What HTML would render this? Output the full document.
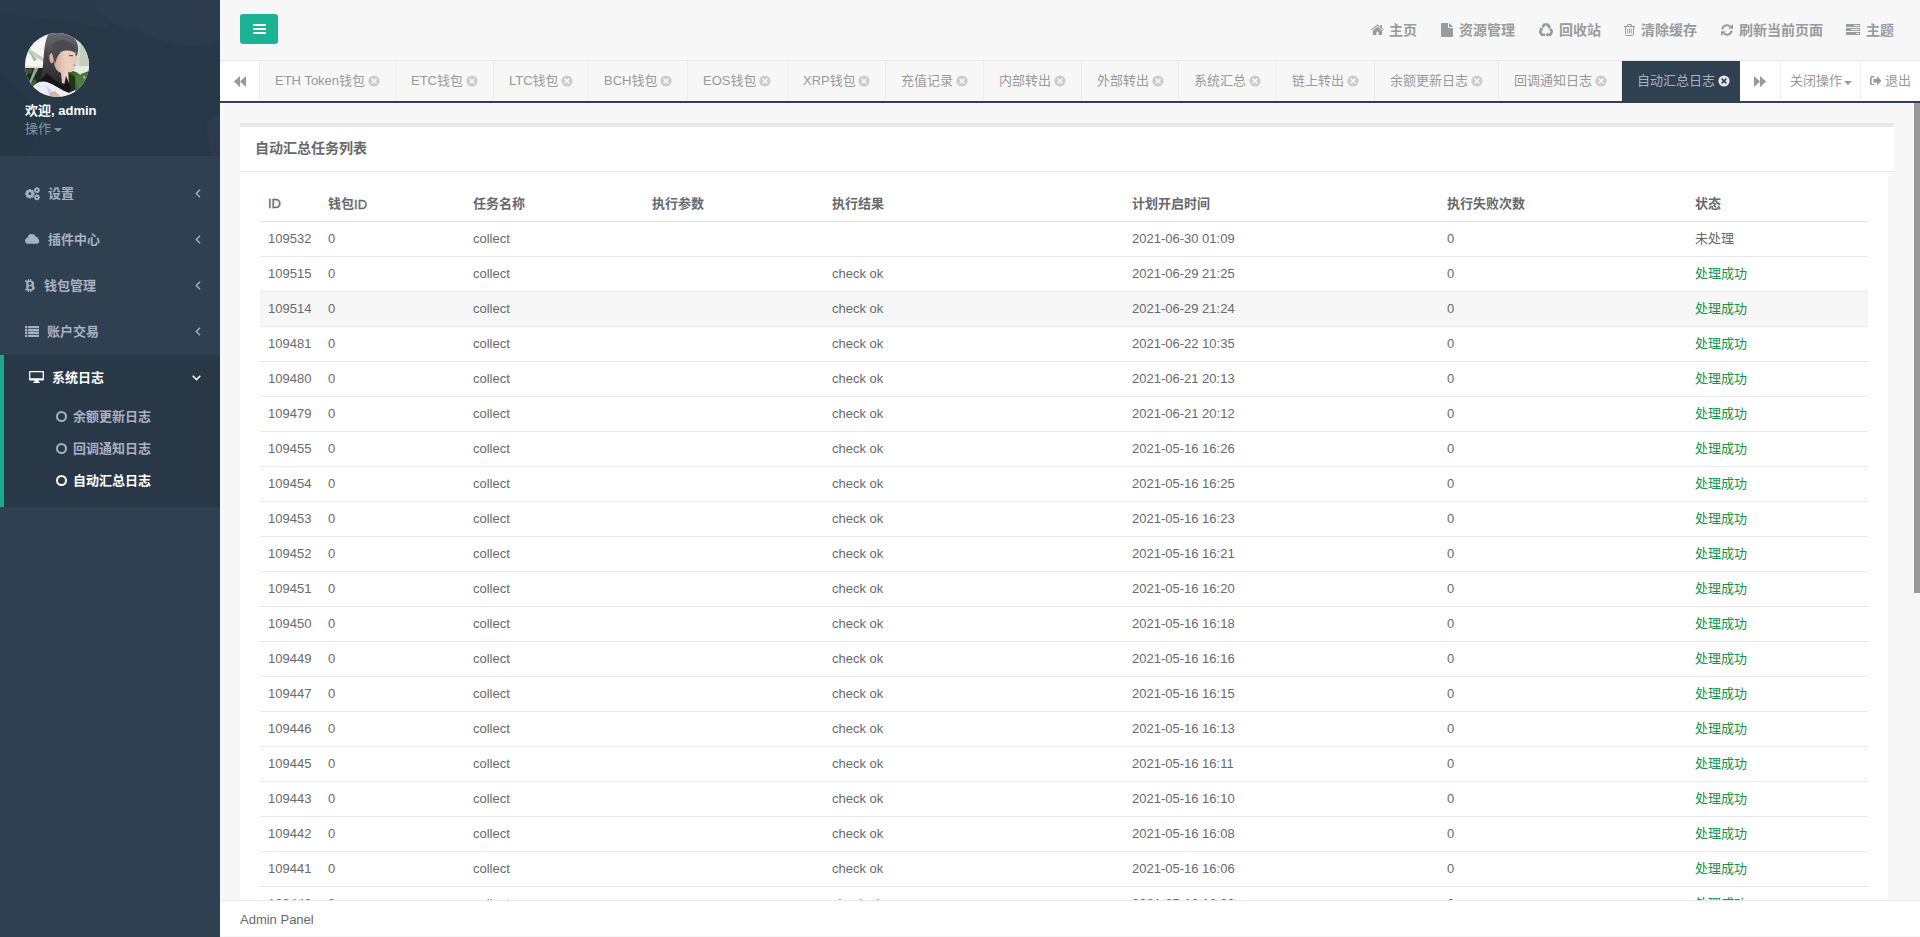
<!DOCTYPE html>
<html lang="zh-CN">
<head>
<meta charset="utf-8">
<title>Admin Panel</title>
<style>
*{box-sizing:border-box;margin:0;padding:0}
html,body{width:1920px;height:937px;overflow:hidden}
body{font-family:"Liberation Sans","Noto Sans CJK SC",sans-serif;font-size:13px;color:#676a6c;background:#f7f7f7;position:relative}
a{text-decoration:none;color:inherit}
svg{display:block}
/* ---------- sidebar ---------- */
#side{position:absolute;left:0;top:0;width:220px;height:937px;background:#2f4050}
#prof{position:absolute;left:0;top:0;width:220px;height:156px;background:#273848;overflow:hidden}
#avatar{position:absolute;left:25px;top:33px;width:64px;height:64px;border-radius:50%;overflow:hidden}
#hello{position:absolute;left:25px;top:101.500px;font-size:13px;font-weight:700;color:#fff;line-height:18px;white-space:nowrap}
#oper{position:absolute;left:25px;top:120px;font-size:13px;color:#8095a8;line-height:18px;white-space:nowrap}
.mi{position:absolute;left:0;width:220px;height:46px;color:#a7b1c2;font-weight:700;font-size:13px;line-height:46px;white-space:nowrap}
.mi .ic{position:absolute;left:0;top:0}
.mi .tx{position:absolute;top:.5px}
.mi .ar{position:absolute;top:0}
#act{position:absolute;left:0;top:355px;width:220px;height:152px;background:#293846;border-left:4px solid #19aa8d}
.si{position:absolute;left:0;width:220px;height:32px;line-height:32px;color:#a7b1c2;font-weight:700;font-size:13px;white-space:nowrap}
.si .c{position:absolute;left:56px;top:11px;width:11px;height:11px;border:2px solid currentColor;border-radius:50%}
.si .t{position:absolute;left:73px;top:.5px}
/* ---------- top ---------- */
#top{position:absolute;left:220px;top:0;width:1700px;height:60px;background:#f7f7f7}
#burger{position:absolute;left:20px;top:14px;width:38px;height:30px;background:#1ab394;border-radius:3px}
#burger i{position:absolute;left:13px;width:13px;height:2px;background:#fff;border-radius:.5px}
.tl{position:absolute;top:0;height:60px;line-height:60px;font-size:14px;font-weight:700;color:#999c9e;white-space:nowrap}
.tl svg{position:absolute;left:0}
/* ---------- tabs ---------- */
#tabs{position:absolute;left:220px;top:60px;width:1700px;height:43px;background:#f7f7f7;border-top:1px solid #e7eaec;border-bottom:2px solid #2f4050;overflow:hidden}
#tabs .btnl{position:absolute;left:0;top:0;width:40px;height:40px;background:#fff;border-right:1px solid #eee}
#tablist{position:absolute;left:40px;top:0;height:40px;white-space:nowrap;font-size:0}
.tab{display:inline-block;height:40px;line-height:40px;font-size:13px;color:#999;border-right:1px solid #eee;text-align:left;padding-left:15px;white-space:nowrap;vertical-align:top;overflow:hidden}
.tab .cx{display:inline-block;vertical-align:-1.500px;color:#ccc;margin-left:-1px}
.tab.active{background:#2f4050;color:#a7b1c2;border-right:none}
.tab.active .cx{color:#e8e8e8}
#tabs .btnr{position:absolute;left:1520px;top:0;width:41px;height:40px;background:#fff;border-right:1px solid #eee}
#tabs .closeop{position:absolute;left:1561px;top:0;width:80px;height:40px;background:#fff;border-right:1px solid #eee;color:#999;line-height:40px;padding-left:9px;font-size:13px}
#tabs .exit{position:absolute;left:1641px;top:0;width:59px;height:40px;background:#fff;color:#999;line-height:40px;font-size:13px}
/* ---------- content ---------- */
#ibt{position:absolute;left:240px;top:123px;width:1654px;height:49px;background:#fff;border-top:4px solid #e7eaec;border-bottom:1px solid #e7eaec}
#ibt h5{position:absolute;left:15px;top:12px;font-size:14px;font-weight:700;color:#676a6c;line-height:18px}
#ibc{position:absolute;left:240px;top:172px;width:1648px;height:728px;background:#fff;overflow:hidden}
table{position:absolute;left:20px;top:13px;width:1608px;border-collapse:collapse;table-layout:fixed}
th{height:36px;text-align:left;padding:2px 8px 0;font-weight:700;font-size:13px;border-bottom:1px solid #e0e3e5;color:#676a6c;vertical-align:middle}
td{height:35px;padding:0 8px;border-bottom:1px solid #e7eaec;font-size:13px;color:#676a6c;vertical-align:middle;white-space:nowrap}
tr.hov td{background:#f6f6f6}
td.ok{color:#12924a}
td.cj{padding-bottom:3px}
.sb6{font-weight:400;-webkit-text-stroke:.35px currentColor}
th.cj{padding:0 8px 1px}
th.cj1{padding:1px 8px 0}
#sb{position:absolute;left:1913px;top:103px;width:7px;height:491px;background:#999;border-left:1px solid #fff;border-bottom:1px solid #fff}
#foot{position:absolute;left:220px;top:900px;width:1700px;height:36px;background:#fff;border-top:1px solid #e7eaec;padding-left:20px;line-height:37px;font-size:13px;color:#676a6c}
</style>
</head>
<body>
<div id="side">
  <div id="prof">
    <svg width="220" height="156" viewBox="0 0 220 156" style="position:absolute;left:0;top:0"><path d="M95 0H220V40C190 52 160 40 135 30C118 24 104 26 95 0Z" fill="#fff" fill-opacity=".025"/><path d="M0 14C40 18 80 22 110 30L95 0H0Z" fill="#fff" fill-opacity=".012"/><path d="M205 122L220 112V156H212Z" fill="#fff" fill-opacity=".02"/><path d="M0 70L40 110L30 156H0Z" fill="#000" fill-opacity=".03"/></svg>
    <div id="avatar">
      <svg viewBox="0 0 64 64" width="64" height="64">
        <defs><filter id="bl" x="-10%" y="-10%" width="120%" height="120%"><feGaussianBlur stdDeviation="0.7"/></filter>
        <linearGradient id="hg" x1="0" y1="0" x2="0" y2="1"><stop offset="0" stop-color="#6b6b73"/><stop offset=".45" stop-color="#424147"/><stop offset="1" stop-color="#222126"/></linearGradient>
        <linearGradient id="sg" x1="0" y1="0" x2="1" y2="0"><stop offset="0" stop-color="#d3ab97"/><stop offset=".5" stop-color="#ecd0bf"/><stop offset="1" stop-color="#e8c7b4"/></linearGradient></defs>
        <rect width="64" height="64" fill="#f6f7f5"/>
        <g filter="url(#bl)">
        <path d="M50 4 L64 10 V34 H50Z" fill="#d3dccf"/>
        <path d="M56 8 L64 20 V34 H54Z" fill="#c3cfbf"/>
        <path d="M2 14 L20 26 L19 29 L1 19Z" fill="#c4d0bc"/>
        <path d="M4 18 L12 27 L9 28Z" fill="#9fb591"/>
        <rect x="0" y="34" width="24" height="30" fill="#1f2a1b"/>
        <path d="M0 36 L8 35 L6 40 L0 42Z" fill="#3a5230"/>
        <path d="M4 50 L10 46 L12 50 L8 55Z" fill="#3f5f31"/>
        <path d="M10 34 L14 34 L5 52 L3 52Z" fill="#9aa79a"/>
        <rect x="40" y="33" width="24" height="31" fill="#3a632d"/>
        <path d="M48 33 H64 V38 L56 41 L48 38Z" fill="#e6ece3"/>
        <path d="M50 42 L62 40 L60 52 L52 56Z" fill="#4a7d38"/><path d="M52 40 L55 39 L56 42Z M58 44 L60 43 L60 46Z" fill="#dfe8da"/>
        <path d="M44 40 L50 44 L50 60 L44 60Z" fill="#24331e"/>
        <path d="M0 33 H22 V35 H0Z" fill="#dfe3dd"/>
        <path d="M24 0 C19 8 19 22 18 32 C17 42 15 50 13 56 L30 60 L44 50 L40 38 L52 22 C55 14 52 5 44 1 C38 -2 30 -2 24 0Z" fill="url(#hg)"/>
        <path d="M33 19 C36 15 44 14 50 17 C51 20 50 22 51 24 L53 27 L51 29 L51 31 L50 32 L50 35 C49 38 46 40 43 39 L44 52 L37 50 L36 40 C31 38 29 33 29 28 C29 24 31 21 33 19Z" fill="url(#sg)"/>
        <path d="M25 21 C27 19 29 21 29 24 C29 28 28 31 26 30 C24 28 24 23 25 21Z" fill="#d9b5a1"/>
        <path d="M31 8 C38 6 47 8 51 16 L50 20 C46 17 40 17 36 19 C33 22 31 26 30 31 L27 20 C27 14 28 10 31 8Z" fill="#4b4a51"/>
        <path d="M48.500 31.500 L50.500 32 L49.500 33.300Z" fill="#a8505a"/>
        <path d="M44 22 H48 V23.200 H44Z" fill="#6b5a58"/>
        <path d="M22 40 C27 45 33 50 39 53 L41 43 L46 55 L43 60 C34 58 24 52 15 48Z" fill="#131317"/>
        <path d="M5 58 C9 50 16 47 22 49 C30 52 36 57 44 60 L50 57 L52 64 H8Z" fill="#eceff9"/>
        <path d="M20 52 C24 54 28 58 30 64 H24 C24 60 22 56 20 52Z" fill="#cfd6ec"/>
        <path d="M24 60 L30 58 L36 64 H26Z" fill="#d9b5a1"/>
        </g>
      </svg>
    </div>
    <div id="hello">欢迎, admin</div>
    <div id="oper">操作<span style="display:inline-block;width:0;height:0;border-left:4px solid transparent;border-right:4px solid transparent;border-top:4px solid #8095a8;margin-left:3px;vertical-align:1px"></span></div>
  </div>

  <div class="mi" style="top:170px"><span class="ic"><svg viewBox="0 0 16 14" width="16" height="14" style="position:absolute;left:24.500px;top:16.500px" fill="currentColor"><path fill-rule="evenodd" d="M8.61 5.61L9.69 5.75L9.69 7.85L8.61 7.99L8.37 8.58L9.03 9.44L7.54 10.93L6.68 10.27L6.09 10.51L5.95 11.59L3.85 11.59L3.71 10.51L3.12 10.27L2.26 10.93L0.77 9.44L1.43 8.58L1.19 7.99L0.11 7.85L0.11 5.75L1.19 5.61L1.43 5.02L0.77 4.16L2.26 2.67L3.12 3.33L3.71 3.09L3.85 2.01L5.95 2.01L6.09 3.09L6.68 3.33L7.54 2.67L9.03 4.16L8.37 5.02ZM3.45 6.80a1.45 1.45 0 1 0 2.9 0a1.45 1.45 0 1 0 -2.9 0Z"/><path fill-rule="evenodd" d="M14.23 2.45L14.93 2.54L14.93 3.86L14.23 3.95L14.08 4.32L14.51 4.87L13.57 5.81L13.02 5.38L12.65 5.53L12.56 6.23L11.24 6.23L11.15 5.53L10.78 5.38L10.23 5.81L9.29 4.87L9.72 4.32L9.57 3.95L8.87 3.86L8.87 2.54L9.57 2.45L9.72 2.08L9.29 1.53L10.23 0.59L10.78 1.02L11.15 0.87L11.24 0.17L12.56 0.17L12.65 0.87L13.02 1.02L13.57 0.59L14.51 1.53L14.08 2.08ZM11.05 3.20a0.85 0.85 0 1 0 1.7 0a0.85 0.85 0 1 0 -1.7 0Z"/><path fill-rule="evenodd" d="M14.23 9.55L14.93 9.64L14.93 10.96L14.23 11.05L14.08 11.42L14.51 11.97L13.57 12.91L13.02 12.48L12.65 12.63L12.56 13.33L11.24 13.33L11.15 12.63L10.78 12.48L10.23 12.91L9.29 11.97L9.72 11.42L9.57 11.05L8.87 10.96L8.87 9.64L9.57 9.55L9.72 9.18L9.29 8.63L10.23 7.69L10.78 8.12L11.15 7.97L11.24 7.27L12.56 7.27L12.65 7.97L13.02 8.12L13.57 7.69L14.51 8.63L14.08 9.18ZM11.05 10.30a0.85 0.85 0 1 0 1.7 0a0.85 0.85 0 1 0 -1.7 0Z"/></svg></span><span class="tx" style="left:48px">设置</span><span class="ar" style="left:195px"><svg viewBox="0 0 6 9" width="6" height="9" style="position:absolute;left:0;top:19px" fill="none" stroke="currentColor" stroke-width="1.4"><path d="M5 0.700L1.300 4.500 5 8.300"/></svg></span></div>
  <div class="mi" style="top:216px"><span class="ic"><svg viewBox="0 0 15 11" width="15" height="11" style="position:absolute;left:24.500px;top:16.500px" fill="currentColor"><path d="M3.200 10.700a3.100 3.100 0 0 1-.6-6.150A4.300 4.300 0 0 1 10.700 3.500a2.600 2.600 0 0 1 2.300 2.300A2.700 2.700 0 0 1 12.300 10.700z"/></svg></span><span class="tx" style="left:48px">插件中心</span><span class="ar" style="left:195px"><svg viewBox="0 0 6 9" width="6" height="9" style="position:absolute;left:0;top:19px" fill="none" stroke="currentColor" stroke-width="1.4"><path d="M5 0.700L1.300 4.500 5 8.300"/></svg></span></div>
  <div class="mi" style="top:262px"><span class="ic"><svg viewBox="0 0 10 13" width="10" height="13" style="position:absolute;left:25px;top:17px" fill="currentColor"><path fill-rule="evenodd" d="M0 1.600H2.900V0H4.100V1.600H5.100V0H6.300V1.650C8.200 1.900 9.200 2.950 9.200 4.400C9.200 5.500 8.600 6.300 7.700 6.600C9 6.900 9.800 7.900 9.800 9.100C9.800 10.600 8.500 11.400 6.300 11.580V13H5.100V11.600H4.100V13H2.900V11.600H0V10.200H1.300V3H0ZM3.600 3.100V5.900H5C6.100 5.900 6.600 5.300 6.600 4.500C6.600 3.600 6.100 3.100 5 3.100ZM3.600 7.300V10.100H5.300C6.500 10.100 7.100 9.600 7.100 8.700C7.100 7.800 6.500 7.300 5.300 7.300Z"/></svg></span><span class="tx" style="left:44px">钱包管理</span><span class="ar" style="left:195px"><svg viewBox="0 0 6 9" width="6" height="9" style="position:absolute;left:0;top:19px" fill="none" stroke="currentColor" stroke-width="1.4"><path d="M5 0.700L1.300 4.500 5 8.300"/></svg></span></div>
  <div class="mi" style="top:308px"><span class="ic"><svg viewBox="0 0 14 11" width="14" height="11" style="position:absolute;left:24.700px;top:17.600px" fill="currentColor"><path d="M0 0h2.300v2.200H0zM3.100 0H14v2.200H3.100zM0 2.930h2.300v2.200H0zM3.100 2.930H14v2.200H3.100zM0 5.860h2.300v2.200H0zM3.100 5.860H14v2.200H3.100zM0 8.800h2.300V11H0zM3.100 8.800H14V11H3.100z"/></svg></span><span class="tx" style="left:47px">账户交易</span><span class="ar" style="left:195px"><svg viewBox="0 0 6 9" width="6" height="9" style="position:absolute;left:0;top:19px" fill="none" stroke="currentColor" stroke-width="1.4"><path d="M5 0.700L1.300 4.500 5 8.300"/></svg></span></div>
  <div id="act"></div>
  <div class="mi" style="top:354px;color:#fff"><span class="ic"><svg viewBox="0 0 15 12" width="15" height="12" style="position:absolute;left:29px;top:17px" fill="currentColor"><path fill-rule="evenodd" d="M1 0h13a1 1 0 0 1 1 1v7.500a1 1 0 0 1-1 1H9.300l.5 1.500h.9v1H4.300v-1h.9l.5-1.500H1a1 1 0 0 1-1-1V1a1 1 0 0 1 1-1zM1.300 1.300v6h12.400v-6z"/></svg></span><span class="tx" style="left:52px">系统日志</span><span class="ar" style="left:192px"><svg viewBox="0 0 9 6" width="9" height="6" style="position:absolute;left:0;top:21px" fill="none" stroke="currentColor" stroke-width="1.500"><path d="M0.700 0.800L4.500 4.600 8.300 0.800"/></svg></span></div>
  <div class="si" style="top:400px"><span class="c"></span><span class="t">余额更新日志</span></div>
  <div class="si" style="top:432px"><span class="c"></span><span class="t">回调通知日志</span></div>
  <div class="si" style="top:464px;color:#fff"><span class="c"></span><span class="t">自动汇总日志</span></div>
</div>

<div id="top">
  <div id="burger"><i style="top:10px"></i><i style="top:14px"></i><i style="top:18px"></i></div>
  <a class="tl" style="left:1151px;padding-left:18px"><svg viewBox="0 0 13 11" width="13" height="11" style="top:24px" fill="currentColor"><path d="M6.500 0.200L0.100 5.500l.7.850L6.500 1.700l5.700 4.650.7-.850-1.900-1.550V1h-1.600v1.650z"/><path d="M6.500 2.800L1.900 6.550V10.500a.4.4 0 0 0 .4.400H5.400V7.700h2.200v3.200h3.100a.4.4 0 0 0 .4-.4V6.550z"/></svg>主页</a>
  <a class="tl" style="left:1221px;padding-left:18px"><svg viewBox="0 0 12 14" width="12" height="14" style="top:23px" fill="currentColor"><path d="M.8 0H7v4.300a.7.700 0 0 0 .7.700H12v8.200a.8.800 0 0 1-.8.800H.8a.8.800 0 0 1-.8-.8V.8A.8.800 0 0 1 .8 0z"/><path d="M8 .1c.3.100.500.300.700.500l2.700 2.700c.2.200.4.400.5.700H8z"/></svg>资源管理</a>
  <a class="tl" style="left:1319px;padding-left:20px"><svg viewBox="0 0 14 13" width="14" height="13" style="top:23px" fill="none" stroke="currentColor"><path d="M5.2 1.5L8.8 1.5L13 8.7L11.2 11.8L2.8 11.8L1 8.7Z" stroke-width="2.600" stroke-linejoin="round" stroke-dasharray="9.95 2.00" stroke-dashoffset="3.18"/><path d="M12.08 2.56L8.11 4.88L11.25 5.71ZM8.60 14.10L8.60 9.50L6.30 11.80ZM0.30 5.33L4.28 7.65L3.45 4.50Z" fill="currentColor" stroke="none"/></svg>回收站</a>
  <a class="tl" style="left:1404px;padding-left:17px"><svg viewBox="0 0 11 12" width="11" height="12" style="top:24px" fill="none" stroke="currentColor"><path d="M0 2.500h11M3.500 2.300V.900a.4.400 0 0 1 .4-.4h3.200a.4.400 0 0 1 .4.400v1.400M1.500 2.700v7.800a1 1 0 0 0 1 1h6a1 1 0 0 0 1-1V2.700" stroke-width="1"/><path d="M3.700 4.500v5M5.500 4.500v5M7.300 4.500v5" stroke-width=".9"/></svg>清除缓存</a>
  <a class="tl" style="left:1501px;padding-left:18px"><svg viewBox="0 0 12 12" width="12" height="12" style="top:24px" fill="none" stroke="currentColor" stroke-width="2.100"><path d="M1.300 5.300A4.700 4.700 0 0 1 9.300 2.700"/><path d="M10.700 6.700A4.700 4.700 0 0 1 2.700 9.300"/><path d="M12 0V4.800H7.200zM0 12V7.200H4.800z" fill="currentColor" stroke="none"/></svg>刷新当前页面</a>
  <a class="tl" style="left:1626px;padding-left:20px"><svg viewBox="0 0 14 11" width="14" height="11" style="top:24px" fill="currentColor"><path fill-rule="evenodd" d="M0 0h14v3H0zM8 1v1h5V1zM0 4h14v3H0zM5 5v1h8V5zM0 8h14v3H0zM10 9v1h3V9z"/></svg>主题</a>
</div>

<div id="tabs">
  <div class="btnl"><svg viewBox="0 0 12 11" width="12" height="11" style="position:absolute;left:14px;top:15px" fill="#999"><path d="M6 0v11L0 5.500zM12 0v11L6 5.500z"/></svg></div>
  <div id="tablist"><a class="tab" style="width:136px">ETH Token钱包 <svg class="cx" viewBox="0 0 12 12" width="12" height="12"><circle cx="6" cy="6" r="5.6" fill="currentColor"/><path d="M4.1 4.1l3.800 3.800M7.900 4.100l-3.800 3.800" stroke="#f7f7f7" stroke-width="1.500" stroke-linecap="round"/></svg></a><a class="tab" style="width:98px">ETC钱包 <svg class="cx" viewBox="0 0 12 12" width="12" height="12"><circle cx="6" cy="6" r="5.6" fill="currentColor"/><path d="M4.1 4.1l3.800 3.800M7.900 4.100l-3.800 3.800" stroke="#f7f7f7" stroke-width="1.500" stroke-linecap="round"/></svg></a><a class="tab" style="width:95px">LTC钱包 <svg class="cx" viewBox="0 0 12 12" width="12" height="12"><circle cx="6" cy="6" r="5.6" fill="currentColor"/><path d="M4.1 4.1l3.800 3.800M7.900 4.100l-3.800 3.800" stroke="#f7f7f7" stroke-width="1.500" stroke-linecap="round"/></svg></a><a class="tab" style="width:99px">BCH钱包 <svg class="cx" viewBox="0 0 12 12" width="12" height="12"><circle cx="6" cy="6" r="5.6" fill="currentColor"/><path d="M4.1 4.1l3.800 3.800M7.900 4.100l-3.800 3.800" stroke="#f7f7f7" stroke-width="1.500" stroke-linecap="round"/></svg></a><a class="tab" style="width:100px">EOS钱包 <svg class="cx" viewBox="0 0 12 12" width="12" height="12"><circle cx="6" cy="6" r="5.6" fill="currentColor"/><path d="M4.1 4.1l3.800 3.800M7.900 4.100l-3.800 3.800" stroke="#f7f7f7" stroke-width="1.500" stroke-linecap="round"/></svg></a><a class="tab" style="width:98px">XRP钱包 <svg class="cx" viewBox="0 0 12 12" width="12" height="12"><circle cx="6" cy="6" r="5.6" fill="currentColor"/><path d="M4.1 4.1l3.800 3.800M7.900 4.100l-3.800 3.800" stroke="#f7f7f7" stroke-width="1.500" stroke-linecap="round"/></svg></a><a class="tab" style="width:98px">充值记录 <svg class="cx" viewBox="0 0 12 12" width="12" height="12"><circle cx="6" cy="6" r="5.6" fill="currentColor"/><path d="M4.1 4.1l3.800 3.800M7.900 4.100l-3.800 3.800" stroke="#f7f7f7" stroke-width="1.500" stroke-linecap="round"/></svg></a><a class="tab" style="width:98px">内部转出 <svg class="cx" viewBox="0 0 12 12" width="12" height="12"><circle cx="6" cy="6" r="5.6" fill="currentColor"/><path d="M4.1 4.1l3.800 3.800M7.900 4.100l-3.800 3.800" stroke="#f7f7f7" stroke-width="1.500" stroke-linecap="round"/></svg></a><a class="tab" style="width:97px">外部转出 <svg class="cx" viewBox="0 0 12 12" width="12" height="12"><circle cx="6" cy="6" r="5.6" fill="currentColor"/><path d="M4.1 4.1l3.800 3.800M7.900 4.100l-3.800 3.800" stroke="#f7f7f7" stroke-width="1.500" stroke-linecap="round"/></svg></a><a class="tab" style="width:98px">系统汇总 <svg class="cx" viewBox="0 0 12 12" width="12" height="12"><circle cx="6" cy="6" r="5.6" fill="currentColor"/><path d="M4.1 4.1l3.800 3.800M7.900 4.100l-3.800 3.800" stroke="#f7f7f7" stroke-width="1.500" stroke-linecap="round"/></svg></a><a class="tab" style="width:98px">链上转出 <svg class="cx" viewBox="0 0 12 12" width="12" height="12"><circle cx="6" cy="6" r="5.6" fill="currentColor"/><path d="M4.1 4.1l3.800 3.800M7.900 4.100l-3.800 3.800" stroke="#f7f7f7" stroke-width="1.500" stroke-linecap="round"/></svg></a><a class="tab" style="width:124px">余额更新日志 <svg class="cx" viewBox="0 0 12 12" width="12" height="12"><circle cx="6" cy="6" r="5.6" fill="currentColor"/><path d="M4.1 4.1l3.800 3.800M7.900 4.100l-3.800 3.800" stroke="#f7f7f7" stroke-width="1.500" stroke-linecap="round"/></svg></a><a class="tab" style="width:123px">回调通知日志 <svg class="cx" viewBox="0 0 12 12" width="12" height="12"><circle cx="6" cy="6" r="5.6" fill="currentColor"/><path d="M4.1 4.1l3.800 3.800M7.900 4.100l-3.800 3.800" stroke="#f7f7f7" stroke-width="1.500" stroke-linecap="round"/></svg></a><a class="tab active" style="width:118px">自动汇总日志 <svg class="cx" viewBox="0 0 12 12" width="12" height="12"><circle cx="6" cy="6" r="5.6" fill="currentColor"/><path d="M4.1 4.1l3.800 3.800M7.900 4.100l-3.800 3.800" stroke="#2f4050" stroke-width="1.500" stroke-linecap="round"/></svg></a></div>
  <div class="btnr"><svg viewBox="0 0 12 11" width="12" height="11" style="position:absolute;left:14px;top:15px" fill="#999"><path d="M0 0v11L6 5.500zM6 0v11L12 5.500z"/></svg></div>
  <div class="closeop">关闭操作<span style="display:inline-block;width:0;height:0;border-left:4px solid transparent;border-right:4px solid transparent;border-top:4px solid #999;margin-left:2px;vertical-align:0px"></span></div>
  <div class="exit"><svg viewBox="0 0 12 10" width="11.500" height="9.500" style="position:absolute;left:8.600px;top:14.600px" fill="#999"><path d="M4.400 0H2.200A2.200 2.200 0 0 0 0 2.200V7.800A2.200 2.200 0 0 0 2.200 10H4.400V8.300H2.400A.7.700 0 0 1 1.700 7.600V2.400A.7.700 0 0 1 2.400 1.700H4.400Z"/><path d="M7.200 .3L12 5 7.200 9.700V6.900H3.600V3.100H7.200Z"/></svg><span style="position:absolute;left:24px;top:0">退出</span></div>
</div>

<div id="ibt"><h5>自动汇总任务列表</h5></div>
<div id="ibc">
<table>
<colgroup><col style="width:60px"><col style="width:145px"><col style="width:179px"><col style="width:180px"><col style="width:300px"><col style="width:315px"><col style="width:248px"><col style="width:181px"></colgroup>
<thead><tr><th><span class="sb6">ID</span></th><th><span style="position:relative;top:-1.500px">钱包</span><span class="sb6">ID</span></th><th class="cj">任务名称</th><th class="cj">执行参数</th><th class="cj">执行结果</th><th class="cj">计划开启时间</th><th class="cj">执行失败次数</th><th class="cj">状态</th></tr></thead>
<tbody>
<tr><td>109532</td><td>0</td><td>collect</td><td></td><td></td><td>2021-06-30 01:09</td><td>0</td><td class="cj">未处理</td></tr>
<tr><td>109515</td><td>0</td><td>collect</td><td></td><td>check ok</td><td>2021-06-29 21:25</td><td>0</td><td class="ok cj">处理成功</td></tr>
<tr class="hov"><td>109514</td><td>0</td><td>collect</td><td></td><td>check ok</td><td>2021-06-29 21:24</td><td>0</td><td class="ok cj">处理成功</td></tr>
<tr><td>109481</td><td>0</td><td>collect</td><td></td><td>check ok</td><td>2021-06-22 10:35</td><td>0</td><td class="ok cj">处理成功</td></tr>
<tr><td>109480</td><td>0</td><td>collect</td><td></td><td>check ok</td><td>2021-06-21 20:13</td><td>0</td><td class="ok cj">处理成功</td></tr>
<tr><td>109479</td><td>0</td><td>collect</td><td></td><td>check ok</td><td>2021-06-21 20:12</td><td>0</td><td class="ok cj">处理成功</td></tr>
<tr><td>109455</td><td>0</td><td>collect</td><td></td><td>check ok</td><td>2021-05-16 16:26</td><td>0</td><td class="ok cj">处理成功</td></tr>
<tr><td>109454</td><td>0</td><td>collect</td><td></td><td>check ok</td><td>2021-05-16 16:25</td><td>0</td><td class="ok cj">处理成功</td></tr>
<tr><td>109453</td><td>0</td><td>collect</td><td></td><td>check ok</td><td>2021-05-16 16:23</td><td>0</td><td class="ok cj">处理成功</td></tr>
<tr><td>109452</td><td>0</td><td>collect</td><td></td><td>check ok</td><td>2021-05-16 16:21</td><td>0</td><td class="ok cj">处理成功</td></tr>
<tr><td>109451</td><td>0</td><td>collect</td><td></td><td>check ok</td><td>2021-05-16 16:20</td><td>0</td><td class="ok cj">处理成功</td></tr>
<tr><td>109450</td><td>0</td><td>collect</td><td></td><td>check ok</td><td>2021-05-16 16:18</td><td>0</td><td class="ok cj">处理成功</td></tr>
<tr><td>109449</td><td>0</td><td>collect</td><td></td><td>check ok</td><td>2021-05-16 16:16</td><td>0</td><td class="ok cj">处理成功</td></tr>
<tr><td>109447</td><td>0</td><td>collect</td><td></td><td>check ok</td><td>2021-05-16 16:15</td><td>0</td><td class="ok cj">处理成功</td></tr>
<tr><td>109446</td><td>0</td><td>collect</td><td></td><td>check ok</td><td>2021-05-16 16:13</td><td>0</td><td class="ok cj">处理成功</td></tr>
<tr><td>109445</td><td>0</td><td>collect</td><td></td><td>check ok</td><td>2021-05-16 16:11</td><td>0</td><td class="ok cj">处理成功</td></tr>
<tr><td>109443</td><td>0</td><td>collect</td><td></td><td>check ok</td><td>2021-05-16 16:10</td><td>0</td><td class="ok cj">处理成功</td></tr>
<tr><td>109442</td><td>0</td><td>collect</td><td></td><td>check ok</td><td>2021-05-16 16:08</td><td>0</td><td class="ok cj">处理成功</td></tr>
<tr><td>109441</td><td>0</td><td>collect</td><td></td><td>check ok</td><td>2021-05-16 16:06</td><td>0</td><td class="ok cj">处理成功</td></tr>
<tr><td>109440</td><td>0</td><td>collect</td><td></td><td>check ok</td><td>2021-05-16 16:03</td><td>0</td><td class="ok cj">处理成功</td></tr>
</tbody>
</table>
</div>
<div id="sb"></div>
<div id="foot">Admin Panel</div>
</body>
</html>
